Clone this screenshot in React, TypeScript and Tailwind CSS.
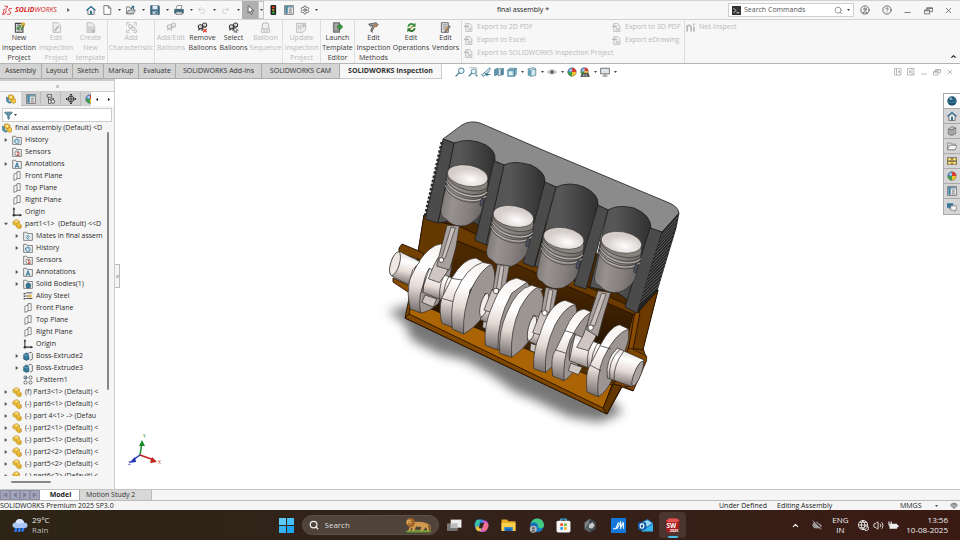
import type { ReactNode } from 'react';
import {
  Search, CircleUser, CircleHelp, Minus, X, Settings, Undo2, Redo2,
  ChevronUp, Volume2, CloudOff, Funnel,
} from 'lucide-react';

type IconName =
  | 'home' | 'file' | 'open' | 'save' | 'print' | 'cursor' | 'traffic' | 'list'
  | 'sheet' | 'edit' | 'template' | 'tag' | 'balloon' | 'balloonX' | 'balloonSel' | 'sequence'
  | 'update' | 'launch' | 'caliper' | 'operations' | 'vendors' | 'export' | 'ni'
  | 'assembly' | 'part' | 'folderHist' | 'folderSensor' | 'folderA' | 'folderMate' | 'folderSolid'
  | 'plane' | 'origin' | 'steel' | 'extrude' | 'pattern' | 'config' | 'target' | 'ball'
  | 'zoom' | 'zoomArea' | 'prev' | 'section' | 'view' | 'cube' | 'eye' | 'scene' | 'monitor'
  | 'globe' | 'library' | 'folder' | 'palette' | 'chat' | 'restore' | 'dockL' | 'dockR';

const folder = <path d="M1 2h5l1 2h8v11H1z" fill="#eee" stroke="#777" strokeWidth="1.4" />;

const page = <path d="M3 1h7l4 4v10H3z" fill="#eee" stroke="currentColor" strokeWidth="1.4" />;

const ball = (
  <>
    <path d="M8 8V1a7 7 0 0 0-7 7z" fill="#4b86c9" />
    <path d="M8 8V1a7 7 0 0 1 7 7z" fill="#df3c30" />
    <path d="M8 8H1a7 7 0 0 0 7 7z" fill="#38a04a" />
    <path d="M8 8h7a7 7 0 0 1-7 7z" fill="#efc32f" />
    <circle cx="8" cy="8" r="7" fill="none" stroke="#666" strokeWidth=".7" />
    <circle cx="6" cy="5" r="2" fill="#fff" opacity=".6" />
  </>
);

const balloons = (
  <g fill="none" stroke="currentColor" strokeWidth="1.7">
    <circle cx="5" cy="7" r="3" />
    <circle cx="11" cy="4.500" r="3" />
    <path d="M4 10l-2 2M9 7L7 13M7 6l2-1M5 7h.5M11 4.500h.5" />
  </g>
);

const icons: Record<IconName, ReactNode> = {
  home: (
    <>
      <path d="M3 8v7h10V8" fill="#eee" stroke="#555" strokeWidth="1.2" />
      <path d="M0 8l8-7 8 7-1.500 1.500L8 4 1.500 9.500z" fill="#2b6c8c" />
      <path d="M6.500 9h3v6h-3z" fill="#2b6c8c" />
    </>
  ),
  file: <path d="M3 1h7l4 4v10H3zM10 1v4h4" fill="#fff" stroke="#555" strokeWidth="1.2" />,
  open: (
    <>
      <path d="M1 3h4l1 2h6v9H1z" fill="#fff" stroke="#555" strokeWidth="1.200" />
      <path d="M4 8h11l-3 6H1z" fill="#c3cdd3" stroke="#555" />
      <path d="M8 1h5v5l-2-2-3 3-1-1 3-3z" fill="#2b6c8c" />
    </>
  ),
  save: (
    <>
      <path d="M1 1h13l1 1v13H1z" fill="#3b6f89" stroke="#34505e" />
      <path d="M4 1h8v6H4z" fill="#e8eef1" />
      <path d="M4 10h8v5H4z" fill="#b9c9d1" />
      <path d="M9 11h2v3H9z" fill="#34505e" />
    </>
  ),
  print: (
    <>
      <path d="M5 1h8l-2 6H3z" fill="#fff" stroke="#555" />
      <path d="M1 7h14v6H1z" fill="#3b6f89" stroke="#34505e" />
      <path d="M3 11h10v4H3z" fill="#ddd" stroke="#555" />
    </>
  ),
  cursor: <path d="M5 1v12l3-3 2 5 2-1-2-5h4z" fill="#fff" stroke="#444" strokeWidth="1.2" />,
  traffic: (
    <>
      <rect x="4" y="0" width="9" height="16" rx="2" fill="#222" />
      <circle cx="8.500" cy="3.500" r="2" fill="#e03a2c" />
      <circle cx="8.500" cy="8" r="2" fill="#a58b26" />
      <circle cx="8.500" cy="12.500" r="2" fill="#2fae46" />
    </>
  ),
  list: (
    <>
      <path d="M1 1h14v14H1z" fill="#f7f7f7" stroke="#555" strokeWidth="1.2" />
      <path d="M2 2h4v12H2z" fill="#4886a3" />
      <path d="M2 2h12v2H2z" fill="#4886a3" />
      <path d="M7.500 6.500h5M7.500 9.500h5M7.500 12.500h5" stroke="#555" strokeWidth="1.3" />
    </>
  ),
  sheet: (
    <>
      <path d="M2 2h11v13H2z" fill="#d8d8d8" stroke="#444" strokeWidth="1.5" />
      <path d="M4 5h7M4 8h7M4 11h5M7 3v11" stroke="#666" />
      <path d="M4 8l2 2 4-5" stroke="#3f9c45" strokeWidth="2" fill="none" />
      <path d="M10 1h6v4l-4 4z" fill="#e0aa35" />
      <path d="M14 5l-4 7" stroke="#487f39" strokeWidth="2" />
    </>
  ),
  edit: (
    <>
      {page}
      <path d="M5 11l5-6 2 2-5 6-2 1z" fill="currentColor" />
    </>
  ),
  template: (
    <>
      {page}
      <path d="M5 7h7v6H5zM5 10h7M8.500 7v6" fill="none" stroke="currentColor" />
      <circle cx="12" cy="13" r="2.500" fill="currentColor" />
    </>
  ),
  tag: (
    <g fill="none" stroke="currentColor" strokeWidth="1.4">
      <path d="M1 1h4M1 1v4M15 1h-4M15 1v4M1 15h4M1 15v-4M15 15h-4M15 15v-4" />
      <circle cx="6" cy="6" r="2.500" />
      <circle cx="11" cy="10" r="2.500" />
      <path d="M3 13l10-9" />
    </g>
  ),
  balloon: balloons,
  balloonX: (
    <>
      {balloons}
      <path d="M9 10l5 5M14 10l-5 5" stroke="#e3432e" strokeWidth="2" />
    </>
  ),
  balloonSel: (
    <>
      {balloons}
      <path d="M9 8v7l2-2 1 3 1-1-1-3h3z" fill="#fff" stroke="#444" />
    </>
  ),
  sequence: (
    <>
      <circle cx="8" cy="6" r="5" fill="#eee" stroke="currentColor" strokeWidth="1.5" />
      <path d="M2 10h12v5H2zM6 10v5M10 10v5" fill="#eee" stroke="currentColor" strokeWidth="1.2" />
    </>
  ),
  update: (
    <>
      <path d="M1 2h13v9l-4 4H1z" fill="#eee" stroke="currentColor" strokeWidth="1.4" />
      <path d="M4 4v7M7 4v7M11 3v5M9 6l2-3 2 3" stroke="currentColor" strokeWidth="1.500" fill="none" />
    </>
  ),
  launch: (
    <>
      <path d="M2 1h9v14H2z" fill="#909090" stroke="#555" />
      <path d="M4 4h5M4 7h5M4 10h5" stroke="#d0d0d0" />
      <path d="M8 5h3V2l5 5-5 5V9H8z" fill="#399842" stroke="#286d2e" strokeWidth=".6" />
    </>
  ),
  caliper: (
    <>
      <path d="M1 3l11-2 3 3-3 3-2-1-4 7-2-1 3-7-4 1z" fill="#999" stroke="#444" />
      <path d="M8 6l4-3 2 2-4 3z" fill="#bf7b3e" />
      <path d="M4 13l3 2" stroke="#555" strokeWidth="1.5" />
    </>
  ),
  operations: (
    <>
      <path d="M2 7a6 6 0 0 1 10-4l2-2v6H8l2-2a3 3 0 0 0-5 2z" fill="#40913f" />
      <path d="M14 9a6 6 0 0 1-10 4l-2 2V9h6l-2 2a3 3 0 0 0 5-2z" fill="#2b752e" />
      <circle cx="8" cy="8" r="1.500" fill="#d49a33" />
    </>
  ),
  vendors: (
    <>
      <path d="M2 1h10v14H2z" fill="#ddd" stroke="#555" strokeWidth="1.2" />
      <path d="M4 4h6M4 7h6M4 10h6" stroke="#777" />
      <path d="M13 5l2 2-6 7-2 1 1-3z" fill="#888" stroke="#444" strokeWidth=".8" />
      <path d="M7 11l3-4 2 1-3 5z" fill="#cf9254" />
    </>
  ),
  export: (
    <>
      {page}
      <path d="M0 5h6V3l3 3-3 3V7H0z" fill="currentColor" />
      <path d="M7 10h6M7 12h6M9 9v5" stroke="currentColor" />
    </>
  ),
  ni: (
    <path d="M2 15V4M2 8c0-5 7-5 7 0v7M14 6v9M14 1v3" fill="none" stroke="currentColor" strokeWidth="3" />
  ),
  assembly: (
    <>
      <path d="M4 2l5-1 4 3-1 4-5 2-4-3z" fill="#f0bd35" stroke="#98711b" strokeWidth=".8" />
      <path d="M0 5l4 1v5l5 2-3 2-5-3z" fill="#4d90ac" stroke="#356373" strokeWidth=".7" />
      <path d="M8 9l5-2 3 2v4l-4 2-4-2z" fill="#f1c647" stroke="#98711b" strokeWidth=".8" />
      <circle cx="8" cy="5" r="1.700" fill="#fff0b0" />
    </>
  ),
  part: (
    <>
      <path d="M1 5l3-3 4-1 4 3v3l3 3v4l-4 2-4-3-1-3-4-1z" fill="#f2c139" stroke="#ad8224" strokeWidth=".9" />
      <path d="M2 5l5 2 5-3M7 7v3l5 2 3-2M12 12v3" fill="none" stroke="#b98d2a" strokeWidth=".9" />
      <path d="M4 4l3-2 3 2-3 2z" fill="#ffe58e" />
    </>
  ),
  folderHist: (
    <>
      {folder}
      <circle cx="8" cy="10" r="3.500" fill="#fff" stroke="#317ba0" strokeWidth="1.5" />
      <path d="M8 8v2h2M4 8v3" stroke="#317ba0" fill="none" />
    </>
  ),
  folderSensor: (
    <>
      {folder}
      <circle cx="8" cy="10" r="3.500" fill="#fff" stroke="#444" />
      <path d="M8 10l2-2" stroke="#d43a2e" strokeWidth="2" />
      <path d="M8 12h4v2H8z" fill="#d43a2e" />
    </>
  ),
  folderA: (
    <>
      {folder}
      <path d="M5 14l3-8 3 8M6 11.500h4" fill="none" stroke="#2b7196" strokeWidth="1.6" />
    </>
  ),
  folderMate: (
    <>
      {folder}
      <path d="M5 7l5 5M7 6l4 4M5 10l4 4" stroke="#4c91ad" strokeWidth="1.6" />
    </>
  ),
  folderSolid: (
    <>
      {folder}
      <path d="M5 8l3-2 4 2v5l-4 2-3-2z" fill="#317799" stroke="#24536a" />
    </>
  ),
  plane: <path d="M3 5l5-2v10l-5 2zM8 3V1h5v11H8" fill="#fbfbfb" stroke="#666" strokeWidth="1.200" />,
  origin: (
    <>
      <path d="M3 2v11h12" fill="none" stroke="#333" strokeWidth="1.7" />
      <path d="M1 4l2-4 2 4zM12 11l4 2-4 2z" fill="#333" />
      <circle cx="3" cy="13" r="2" fill="#333" />
    </>
  ),
  steel: (
    <>
      <path d="M1 4h3M1 8h3M1 12h3" stroke="#333" strokeWidth="2" />
      <path d="M5 3h10M5 8h7M5 12h10" stroke="#555" strokeWidth="1.6" />
      <path d="M10 5l5 2-3 4-4-2z" fill="#e2b64a" />
    </>
  ),
  extrude: (
    <>
      <path d="M1 6l4-3 5 2v8l-4 2-5-2z" fill="#34789a" stroke="#26566d" />
      <path d="M1 6l5 2 4-3" fill="none" stroke="#91bfd2" />
      <path d="M9 3l4-1 2 2v9l-4 2" fill="#eee" stroke="#555" strokeWidth="1.200" />
    </>
  ),
  pattern: (
    <>
      <g fill="#fff" stroke="#555" strokeWidth="1.4">
        <circle cx="4" cy="4" r="2.500" /><circle cx="12" cy="4" r="2.500" />
        <circle cx="4" cy="12" r="2.500" /><circle cx="12" cy="12" r="2.500" />
      </g>
      <path d="M3 3h3v3H3z" fill="#317799" />
    </>
  ),
  config: (
    <g fill="none" stroke="#555" strokeWidth="1.400">
      <path d="M2 1h7v4H2zM4 5v10h4M4 9h4M8 7h4v4H8z" fill="#eee" />
      <circle cx="11" cy="12" r="3" fill="#ddd" />
    </g>
  ),
  target: (
    <g stroke="#333" fill="none" strokeWidth="1.500">
      <circle cx="8" cy="8" r="4.500" />
      <path d="M8 0v16M0 8h16" />
      <path d="M6 2l2-2 2 2M6 14l2 2 2-2M2 6L0 8l2 2M14 6l2 2-2 2" />
    </g>
  ),
  ball,
  zoom: (
    <>
      <circle cx="10" cy="6" r="4.500" fill="#e5f2f8" stroke="#477b93" strokeWidth="1.500" />
      <path d="M7 9l-6 6" stroke="#477b93" strokeWidth="2.200" />
    </>
  ),
  zoomArea: (
    <>
      <path d="M2 1h12v12" fill="none" stroke="#777" strokeDasharray="2 1" />
      <circle cx="9" cy="7" r="4" fill="#e5f2f8" stroke="#477b93" strokeWidth="1.300" />
      <path d="M6 10l-5 5M12 12l3 3" stroke="#477b93" strokeWidth="2" />
    </>
  ),
  prev: (
    <>
      <path d="M14 1l-8 8 3 3 6-8zM6 9l-5 3 2 3 6-3z" fill="#d8e3e8" stroke="#477b93" strokeWidth="1.300" />
      <path d="M8 12h7M8 12l3-3M8 12l3 3" stroke="#2b6c8c" strokeWidth="1.500" />
    </>
  ),
  section: (
    <>
      <path d="M1 4l5-2v10l-5 2z" fill="#5c9bb5" stroke="#3a6b80" />
      <path d="M7 3l4-1v11l-4 1z" fill="#d9e8ee" stroke="#3a6b80" />
      <path d="M12 3l3-1v10l-3 1z" fill="#4b8ba6" stroke="#3a6b80" />
    </>
  ),
  view: (
    <>
      <path d="M1 5l3-3h11v9l-3 4H1z" fill="#85b7cb" stroke="#44788e" />
      <path d="M1 5h11v10M12 5l3-3" fill="none" stroke="#3a6b80" />
      <path d="M3 7h6v6H3z" fill="#e0edf2" />
    </>
  ),
  cube: (
    <>
      <path d="M2 3l8-2 4 2v10l-7 2-5-2z" fill="#d6e8ef" stroke="#44788e" strokeWidth="1.200" />
      <path d="M2 3l5 2v10l-5-2z" fill="#64a0b8" />
      <path d="M7 5l7-2" stroke="#44788e" />
    </>
  ),
  eye: (
    <>
      <path d="M1 8q7-7 14 0-7 6-14 0z" fill="#ddd" stroke="#888" />
      <circle cx="8" cy="8" r="2.700" fill="#555" />
    </>
  ),
  scene: (
    <>
      <g transform="scale(.9)">{ball}</g>
      <path d="M1 15l4-5h8l2 5z" fill="#555" stroke="#333" />
      <path d="M5 12h2v2H5zM9 12h2v2H9z" fill="#ddd" />
    </>
  ),
  monitor: (
    <path d="M1 2h14v9H1zM8 11v3M4 14.500h8" fill="#dfe6e9" stroke="#666" strokeWidth="1.400" />
  ),
  globe: (
    <>
      <circle cx="8" cy="8" r="7.500" fill="#1f5572" />
      <path d="M3 5q5 3 10-1M1 9q7 4 14-1" fill="none" stroke="#5fa2c2" />
      <circle cx="6" cy="4" r="2" fill="#b4d9e8" opacity=".7" />
    </>
  ),
  library: (
    <path d="M2 5l6-4 6 2v9l-6 3-6-2zM2 5l6 1v9M8 6l6-3M5 5v9M11 4v9" fill="#ccc" stroke="#555" />
  ),
  folder: (
    <>
      <path d="M1 3h5l1 2h6v9H1z" fill="#ddd" stroke="#666" />
      <path d="M4 7h12l-3 7H1z" fill="#f5f5f5" stroke="#666" />
    </>
  ),
  palette: (
    <>
      <path d="M0 2h16v12H0z" fill="#666" />
      <path d="M1 3h5l2 3 2-3h5v4H1zM1 9h14v4h-5l-2-2-2 2H1z" fill="#e8b93c" />
      <path d="M3 4h2v2H3zM11 4h2v2h-2zM3 10h2v2H3zM11 10h2v2h-2z" fill="#fff" />
    </>
  ),
  chat: (
    <>
      <path d="M0 2h10v7H5l-2 3V9H0z" fill="#37779a" />
      <path d="M6 6h9v7h-2v2l-3-2H6z" fill="#f4f4f4" stroke="#666" />
    </>
  ),
  restore: (
    <path d="M1 7h9v7H1zM5 7V3h10v7h-5M1 8.500h9M5 4.500h10" fill="none" stroke="currentColor" strokeWidth="1.300" />
  ),
  dockL: <path d="M1 1h13v13H1zM5 1v13M11 5L8 7.500l3 2.500z" fill="none" stroke="currentColor" strokeWidth="1.300" />,
  dockR: <path d="M1 1h13v13H1zM10 1v13M5 5l3 2.500L5 10z" fill="none" stroke="currentColor" strokeWidth="1.300" />,
};

function Icon({ name, className = 'size-[10px]' }: { name: IconName; className?: string }) {
  return (
    <svg viewBox="0 0 16 16" className={`${className} shrink-0`} aria-hidden="true">
      {icons[name]}
    </svg>
  );
}

function Caret({ className = '' }: { className?: string }) {
  return (
    <svg viewBox="0 0 6 4" className={`w-[3px] h-[2px] shrink-0 ${className}`} aria-hidden="true">
      <path d="M0 0h6L3 4z" fill="#444" />
    </svg>
  );
}

function Logo() {
  return (
    <a href="#" className="flex items-center gap-[2px] text-[#d92b2b] w-[70px] pl-[2px]">
      <svg viewBox="0 0 30 30" className="size-[11px]" aria-hidden="true">
        <g fill="none" stroke="#d92b2b" strokeWidth="2.600">
          <path d="M7 3l8 1q3 3-5 6M2 14q10-4 9 4-1 7-9 8l3-9" />
          <path d="M27 10q-9-2-9 3c0 4 7 4 6 9q-2 5-10 3" />
        </g>
      </svg>
      <span className="text-[7px] italic"><b>SOLID</b>WORKS</span>
      <svg viewBox="0 0 4 6" className="w-[3px] h-1 ml-auto" aria-hidden="true"><path d="M0 0l4 3-4 3z" fill="#555" /></svg>
    </a>
  );
}

function TitleBar() {
  const quick: IconName[] = ['open', 'save', 'print'];
  return (
    <header className="flex items-center h-5 border-t border-b border-[#d2d2d2] bg-[#f7f7f7]">
      <div className="flex items-center w-[318px]">
        <Logo />
        <button aria-label="Home" className="ml-4 w-3"><Icon name="home" /></button>
        <button aria-label="New" className="ml-1 flex items-center justify-between w-[19px]"><Icon name="file" /><Caret /></button>
        {quick.map((q) => (
          <button key={q} aria-label={q} className="ml-[5px] flex items-center justify-between w-[19px]"><Icon name={q} /><Caret /></button>
        ))}
        <button aria-label="Undo" className="ml-1 flex items-center justify-between w-[19px] text-[#c4c4c4]"><Undo2 size={9} /><Caret /></button>
        <button aria-label="Redo" className="ml-[5px] flex items-center justify-between w-[19px] text-[#c4c4c4]"><Redo2 size={9} /><Caret /></button>
        <button aria-label="Select" className="ml-[2px] flex items-center h-[18px] bg-[#b0b0b0]">
          <span className="w-4 flex justify-center"><Icon name="cursor" /></span>
          <span className="w-[6px] h-[18px] bg-[#f3f3f3] border border-[#c4c4c4] flex items-center justify-center"><Caret /></span>
        </button>
        <button aria-label="Rebuild" className="ml-1"><Icon name="traffic" /></button>
        <button aria-label="File properties" className="ml-[6px]"><Icon name="list" /></button>
        <button aria-label="Options" className="ml-[6px] flex items-center gap-[5px] text-[#555]"><Settings size={10} /><Caret /></button>
      </div>
      <h1 className="flex-1 text-center text-[7px]">final assembly *</h1>
      <div className="flex items-center w-[232px]">
        <label className="flex items-center h-[14px] w-[126px] border border-[#d0d0d0] bg-white px-[3px]">
          <svg viewBox="0 0 16 16" className="size-[9px]" aria-hidden="true">
            <path d="M0 0h16v16H0z" fill="#333" />
            <path d="M3 4l4 4-4 4M8 12h5" stroke="#fff" fill="none" strokeWidth="1.500" />
          </svg>
          <input aria-label="Search Commands" placeholder="Search Commands" className="flex-1 min-w-0 pl-[3px] outline-none text-[7px] placeholder:text-[#555]" />
          <Search size={9} className="text-[#777] mr-1" />
          <Caret />
        </label>
        <div className="flex-1 flex justify-between items-center pl-[6px] pr-[7px] text-[#555]">
          <button aria-label="Account"><CircleUser size={10} /></button>
          <button aria-label="Help"><CircleHelp size={10} /></button>
          <button aria-label="Minimize"><Minus size={9} className="mt-1" /></button>
          <button aria-label="Restore"><Icon name="restore" className="size-[9px]" /></button>
          <button aria-label="Close"><X size={9} /></button>
        </div>
      </div>
    </header>
  );
}

interface Command {
  icon: IconName;
  lines: string[];
  width: string;
  off?: boolean;
}

const groups: Command[][] = [
  [
    { icon: 'sheet', lines: ['New', 'Inspection', 'Project'], width: 'w-[38px]' },
    { icon: 'edit', lines: ['Edit', 'Inspection', 'Project'], width: 'w-[36px]', off: true },
    { icon: 'template', lines: ['Create', 'New', 'template'], width: 'w-[33px]', off: true },
  ],
  [{ icon: 'tag', lines: ['Add', 'Characteristic'], width: 'w-[46px]', off: true }],
  [
    { icon: 'balloon', lines: ['Add/Edit', 'Balloons'], width: 'w-[32px]', off: true },
    { icon: 'balloonX', lines: ['Remove', 'Balloons'], width: 'w-[31px]' },
    { icon: 'balloonSel', lines: ['Select', 'Balloons'], width: 'w-[31px]' },
    { icon: 'sequence', lines: ['Balloon', 'Sequence'], width: 'w-[33px]', off: true },
  ],
  [{ icon: 'update', lines: ['Update', 'Inspection', 'Project'], width: 'w-[37px]', off: true }],
  [{ icon: 'launch', lines: ['Launch', 'Template', 'Editor'], width: 'w-[33px]' }],
  [
    { icon: 'caliper', lines: ['Edit', 'Inspection', 'Methods'], width: 'w-[37px]' },
    { icon: 'operations', lines: ['Edit', 'Operations'], width: 'w-[38px]' },
    { icon: 'vendors', lines: ['Edit', 'Vendors'], width: 'w-[31px]' },
  ],
];

function ExportColumn({ items, className }: { items: string[]; className: string }) {
  return (
    <div className={`flex flex-col items-start pt-[1px] text-[#b9b9b9] ${className}`}>
      {items.map((t) => (
        <button key={t} disabled className="flex items-center gap-1 h-[13px] whitespace-nowrap">
          <Icon name={t === 'Net-Inspect' ? 'ni' : 'export'} className="size-[9px]" />{t}
        </button>
      ))}
    </div>
  );
}

function Ribbon() {
  return (
    <section className="flex h-11 bg-[#f7f7f7] border-b border-[#b5b5b5] text-[7px]">
      {groups.map((g, i) => (
        <div key={i} className="flex border-r border-[#dedede]">
          {g.map((c, j) => (
            <button
              key={j}
              disabled={c.off}
              className={`${c.width} flex flex-col items-center pt-[2px] whitespace-nowrap leading-[10px] ${c.off ? 'text-[#bababa]' : 'text-[#3a3a3a]'}`}
            >
              <Icon name={c.icon} className="size-[11px]" />
              {c.lines.map((l) => <span key={l}>{l}</span>)}
            </button>
          ))}
        </div>
      ))}
      <ExportColumn className="w-[148px] pl-[2px]" items={['Export to 2D PDF', 'Export to Excel', 'Export to SOLIDWORKS Inspection Project']} />
      <ExportColumn className="w-[75px] pl-[2px] border-r border-[#dedede]" items={['Export to 3D PDF', 'Export eDrawing']} />
      <ExportColumn className="pl-[1px]" items={['Net-Inspect']} />
      <button aria-label="Collapse ribbon" className="ml-auto self-end p-[3px]"><ChevronUp size={7} strokeWidth={4} /></button>
    </section>
  );
}

const tabs = [
  ['Assembly', 'w-[42px]'], ['Layout', 'w-[31px]'], ['Sketch', 'w-[31px]'], ['Markup', 'w-[35px]'],
  ['Evaluate', 'w-[37px]'], ['SOLIDWORKS Add-Ins', 'w-[86px]'], ['SOLIDWORKS CAM', 'w-[78px]'],
];

const viewTools: { icon: IconName; menu?: boolean }[] = [
  { icon: 'zoom' }, { icon: 'zoomArea' }, { icon: 'prev' }, { icon: 'section' },
  { icon: 'view', menu: true }, { icon: 'cube', menu: true }, { icon: 'eye', menu: true },
  { icon: 'ball' }, { icon: 'scene', menu: true }, { icon: 'monitor', menu: true },
];

function TabRow() {
  return (
    <nav className="flex h-[15px] text-[7px] bg-white">
      {tabs.map(([t, w]) => (
        <button key={t} className={`${w} bg-[#d4d4d4] border-r border-b border-[#aaa] whitespace-nowrap text-[#333]`}>{t}</button>
      ))}
      <button className="w-[102px] bg-[#f7f7f7] border-r border-b border-[#ccc] font-bold text-[#333] whitespace-nowrap">SOLIDWORKS Inspection</button>
      <div className="flex items-center gap-[3px] pl-[13px]">
        {viewTools.map((v) => (
          <button key={v.icon} aria-label={v.icon} className="flex items-center gap-1">
            <Icon name={v.icon} />{v.menu && <Caret />}
          </button>
        ))}
      </div>
      <div className="ml-auto flex items-center gap-[5px] pr-[6px] text-[#999]">
        <button aria-label="Dock left"><Icon name="dockL" className="size-2" /></button>
        <button aria-label="Dock right"><Icon name="dockR" className="size-2" /></button>
        <button aria-label="Minimize document"><Minus size={8} className="mt-1" /></button>
        <button aria-label="Restore document"><Icon name="restore" className="size-2" /></button>
        <button aria-label="Close document"><X size={8} /></button>
      </div>
    </nav>
  );
}

interface Node {
  icon: IconName;
  text: string;
  level: 0 | 1 | 2;
  arrow?: 'open' | 'closed';
}

const tree: Node[] = [
  { icon: 'assembly', text: 'final assembly (Default) <D', level: 0 },
  { icon: 'folderHist', text: 'History', level: 1, arrow: 'closed' },
  { icon: 'folderSensor', text: 'Sensors', level: 1 },
  { icon: 'folderA', text: 'Annotations', level: 1, arrow: 'closed' },
  { icon: 'plane', text: 'Front Plane', level: 1 },
  { icon: 'plane', text: 'Top Plane', level: 1 },
  { icon: 'plane', text: 'Right Plane', level: 1 },
  { icon: 'origin', text: 'Origin', level: 1 },
  { icon: 'part', text: 'part1<1>  (Default) <<D', level: 1, arrow: 'open' },
  { icon: 'folderMate', text: 'Mates in final assem', level: 2, arrow: 'closed' },
  { icon: 'folderHist', text: 'History', level: 2, arrow: 'closed' },
  { icon: 'folderSensor', text: 'Sensors', level: 2 },
  { icon: 'folderA', text: 'Annotations', level: 2, arrow: 'closed' },
  { icon: 'folderSolid', text: 'Solid Bodies(1)', level: 2, arrow: 'closed' },
  { icon: 'steel', text: 'Alloy Steel', level: 2 },
  { icon: 'plane', text: 'Front Plane', level: 2 },
  { icon: 'plane', text: 'Top Plane', level: 2 },
  { icon: 'plane', text: 'Right Plane', level: 2 },
  { icon: 'origin', text: 'Origin', level: 2 },
  { icon: 'extrude', text: 'Boss-Extrude2', level: 2, arrow: 'closed' },
  { icon: 'extrude', text: 'Boss-Extrude3', level: 2, arrow: 'closed' },
  { icon: 'pattern', text: 'LPattern1', level: 2 },
  { icon: 'part', text: '(f) Part3<1> (Default) <', level: 1, arrow: 'closed' },
  { icon: 'part', text: '(-) part6<1> (Default) <', level: 1, arrow: 'closed' },
  { icon: 'part', text: '(-) part 4<1> -> (Defau', level: 1, arrow: 'closed' },
  { icon: 'part', text: '(-) part2<1> (Default) <', level: 1, arrow: 'closed' },
  { icon: 'part', text: '(-) part5<1> (Default) <', level: 1, arrow: 'closed' },
  { icon: 'part', text: '(-) part2<2> (Default) <', level: 1, arrow: 'closed' },
  { icon: 'part', text: '(-) part5<2> (Default) <', level: 1, arrow: 'closed' },
  { icon: 'part', text: '(-) part6<2> (Default) <', level: 1, arrow: 'closed' },
];

const indent = { 0: 'pl-[2px]', 1: 'pl-1', 2: 'pl-[15px]' };

function FeatureTree() {
  const panes: IconName[] = ['list', 'config', 'target'];
  return (
    <aside className="w-[115px] shrink-0 flex flex-col bg-[#f5f5f5] border-r border-[#ccc] text-[7px]">
      <div className="h-[13px] border-t-2 border-b border-[#ccc] flex items-center justify-center">
        <span className="size-[3px] rounded-full border border-[#999]" />
      </div>
      <div className="flex h-[14px]">
        <button aria-label="Feature tree" className="w-[21px] flex items-center justify-center"><Icon name="assembly" /></button>
        {panes.map((p) => (
          <button key={p} aria-label={p} className="w-5 flex items-center justify-center bg-[#d2d2d2] border-r border-b border-[#bbb]"><Icon name={p} /></button>
        ))}
        <button aria-label="Display" className="w-[10px] pl-1 overflow-hidden bg-[#d2d2d2] flex items-center"><Icon name="ball" /></button>
        <button aria-label="Scroll left" className="w-3 bg-white flex items-center justify-center">
          <svg viewBox="0 0 4 6" className="w-[2px] h-[3px]"><path d="M4 0L0 3l4 3z" /></svg>
        </button>
        <button aria-label="Scroll right" className="w-[11px] bg-white flex items-center justify-center">
          <svg viewBox="0 0 4 6" className="w-[2px] h-[3px]"><path d="M0 0l4 3-4 3z" /></svg>
        </button>
      </div>
      <button aria-label="Filter" className="mx-[2px] mt-[2px] h-[14px] bg-white border border-[#ccc] flex items-center pl-[1px] gap-[1px]">
        <Funnel size={9} fill="#5d91a9" className="text-[#426f84]" /><Caret />
      </button>
      <div className="flex flex-1 min-h-0">
        <ul className="flex-1 min-w-0 overflow-hidden text-[#2c2c2c]">
          {tree.map((n, i) => (
            <li key={i} className={`h-3 flex items-center whitespace-pre ${indent[n.level]}`}>
              {n.level > 0 && (
                <span className="w-2 shrink-0">
                  {n.arrow && (
                    <svg viewBox="0 0 6 6" className="size-1" aria-hidden="true">
                      <path d={n.arrow === 'open' ? 'M0 1h6L3 5z' : 'M1 0l4 3-4 3z'} fill="#555" />
                    </svg>
                  )}
                </span>
              )}
              <Icon name={n.icon} /><span className="pl-[3px]">{n.text}</span>
            </li>
          ))}
        </ul>
        <div className="w-[10px] pt-[10px] pl-[3px]">
          <div className="w-[2px] h-3/4 bg-[#888] rounded" />
        </div>
      </div>
      <div className="h-[13px] pt-[5px] pl-[11px]"><div className="w-10 h-[2px] bg-[#888] rounded" /></div>
    </aside>
  );
}

const pistons = [[0, 0], [45.700, 40.700], [96, 62.600], [153.700, 66.600]];

function Piston({ x, y }: { x: number; y: number }) {
  return (
    <g transform={`translate(${x} ${y})`} stroke="#2c2a29" strokeWidth=".6">
      <path d="M447 173L446 186 441 209Q440 217 446 219 452 226 461 226 467 226 471 223 479 218 481 213L487 191 488 181z" fill="url(#piston)" />
      <path d="M446 181c6 14 31 20 41 11M445 185c6 14 31 20 41 11" fill="none" stroke="#bdb8b4" strokeWidth="1.100" />
      <path d="M446 179c6 14 31 20 41 12M446 182c6 14 31 20 41 12M445 184c6 14 31 20 41 11M445 187c6 14 30 20 40 11" fill="none" />
      <path d="M447 172v4c6 13 29 19 40 12l1-6z" fill="#86827c" />
      <ellipse cx="467.700" cy="175.700" rx="20.400" ry="10.600" transform="rotate(10 467.700 175.700)" fill="url(#crown)" />
      <ellipse cx="482" cy="202" rx="1.700" ry="4.500" transform="rotate(14 482 202)" fill="#4a5163" />
    </g>
  );
}

// crank web: a lit rim and a shaded cheek
function Web({ rim, face }: { rim: string; face?: string }) {
  return (
    <>
      <path d={rim} fill="url(#rim)" />
      {face && <path d={face} fill="#9d9592" />}
    </>
  );
}

// connecting rod: shank with a dark channel, then the big end
function Rod({ top, groove, end }: { top: string; groove: string; end: string }) {
  return (
    <>
      <path d={end} fill="#cfc5c1" />
      <path d={top} fill="#a8a09c" />
      <path d={groove} fill="#c9c0bc" stroke="#3c3634" strokeWidth="2" />
    </>
  );
}

function Engine() {
  const fins = Array.from({ length: 17 }, (_, i) => i);
  return (
    <svg viewBox="115 79 845 410" className="w-full h-full" role="img" aria-label="Engine assembly">
      <defs>
        <linearGradient id="piston" x1="0" x2="1" y1="0" y2=".2">
          <stop offset="0" stopColor="#716d6a" /><stop offset=".35" stopColor="#979290" /><stop offset=".7" stopColor="#85807d" /><stop offset="1" stopColor="#6a6663" />
        </linearGradient>
        <radialGradient id="crown" cx=".6" cy=".65">
          <stop offset="0" stopColor="#fff" /><stop offset="1" stopColor="#d4cdc9" />
        </radialGradient>
        <linearGradient id="bore" x1="0" x2="1">
          <stop offset="0" stopColor="#535353" /><stop offset=".4" stopColor="#575757" /><stop offset="1" stopColor="#303030" />
        </linearGradient>
        <linearGradient id="rim" x1=".5" x2=".4" y1="0" y2="1">
          <stop offset="0" stopColor="#f6f3f1" /><stop offset=".35" stopColor="#fff" /><stop offset=".65" stopColor="#e4d9d3" /><stop offset="1" stopColor="#777170" />
        </linearGradient>
        <linearGradient id="shaft" x1=".6" x2=".4" y1="0" y2="1">
          <stop offset="0" stopColor="#d8d2cf" /><stop offset=".3" stopColor="#fff" /><stop offset=".6" stopColor="#e5dad4" /><stop offset="1" stopColor="#6f6967" />
        </linearGradient>
        <linearGradient id="back" x1="0" x2=".25" y1="1" y2="0">
          <stop offset="0" stopColor="#9b5a04" /><stop offset=".5" stopColor="#2a1500" /><stop offset="1" stopColor="#633602" />
        </linearGradient>
        <filter id="soft" x="-20%" y="-30%" width="140%" height="160%"><feGaussianBlur stdDeviation="5.500" /></filter>
      </defs>

      <path d="M388 312L412 304 608 398 623 412 600 422 570 417 535 400 515 392 490 374 465 360 440 354 412 340 404 322z" fill="#555" opacity=".8" filter="url(#soft)" />

      {/* crankcase */}
      <g stroke="#241200" strokeWidth=".9" strokeLinejoin="round">
        <path d="M424 215L418 254 405 318 607 414 622 387 633 391 646 357 643 348 658 290 640 300 440 215z" fill="#774203" />
        <path d="M432 218L424 255 410 306 606 396 616 380 634 311 470 240z" fill="url(#back)" />
        <path d="M411 300L417 303 612 385 603 409 409 316z" fill="#ab6403" />
        <path d="M405 318L409 314 603 408 607 414z" fill="#804700" />
        <path d="M607 414L603 408 613 384 622 386z" fill="#653700" />
        <path d="M629 348L640 310 658 290 643 350z" fill="#6b3a00" />
        <path d="M628 350L631 335 635 311 640 313 633 349z" fill="#8a4c00" />
        <path d="M438 222L470 200 570 230 640 290 634 312 540 276 440 246z" fill="#4a2800" stroke="none" />
        <path d="M457 225L520 256 634 308 635 315 520 266 455 240z" fill="#6a3a00" />
        <path d="M424 215L438 222 460 226 445 250 424 262 417 258z" fill="#653800" />
        <path d="M399 248L402 244 419 251 424 254 421 260 399 253z" fill="#744000" />
        <path d="M393 278L410 286 408 292 393 282z" fill="#8a4d00" />
      </g>

      {/* head */}
      <g stroke="#1c1c1c" strokeWidth=".8" strokeLinejoin="round">
        <path d="M661 232L679 213 676 228 657 291 637 313z" fill="#242424" />
        <path d="M443 139L462 125Q470 120 480 123L545 151 667 202Q678 206 679 213L662 232 650 228 608 210 556 187 504 165 454 143z" fill="#8b8b8b" />
        <path d="M454 143Q470 137 486 145 496 151 495 160L480 226 466 218 438 223z" fill="url(#bore)" />
        <path d="M504 165Q514 160 531 165 546 172 545 182L530 258 486 244z" fill="url(#bore)" />
        <path d="M556 187Q570 181 584 187 599 194 598 205L585 283 535 266z" fill="url(#bore)" />
        <path d="M608 210Q618 204 634 208 651 215 651 228L632 303 618 293 590 287z" fill="url(#bore)" />
        <path d="M443 139L454 143 438 223 425 219z" fill="#4b4b4b" />
        <path d="M494 161L504 165 486 245 475 240z" fill="#4b4b4b" />
        <path d="M545 182L556 187 534 267 523 263z" fill="#4b4b4b" />
        <path d="M598 205L608 210 586 289 574 285z" fill="#4b4b4b" />
        <path d="M650 228L662 232 637 313 625 307z" fill="#4b4b4b" />
        {fins.map((i) => (
          <path key={i} d={`M${661 - i * 1.35} ${236 + i * 4.2}L${678 - i * 1.2} ${217 + i * 4.3}`} stroke="#666" strokeWidth=".9" />
        ))}
        <path d="M442 142L425 217" stroke="#2b2b2b" strokeWidth="3" strokeDasharray="2.600 1.700" fill="none" />
      </g>

      {pistons.map(([x, y]) => <Piston key={x} x={x} y={y} />)}

      {/* crankshaft, left half */}
      <g transform="translate(370 230) scale(.3333)" stroke="#332e2c" strokeWidth="2.200" strokeLinejoin="round">
        <Web rim="M145 97Q180 45 212 42 235 45 240 70L170 150 150 248 120 236Q110 190 118 150z" face="M240 70Q250 90 240 140L205 220Q180 245 152 249 140 200 170 140z" />
        <path d="M90 65L150 95 128 120 115 164 65 138Q54 110 72 78z" fill="url(#shaft)" />
        <ellipse cx="75" cy="101" rx="13" ry="37" transform="rotate(17 75 101)" fill="#eee8e5" />
        <path d="M165 195l35 12-10 24-34-14z" fill="#cfc6c2" />
        <path d="M178 115L248 145 218 212 155 185z" fill="url(#shaft)" />
        <path d="M178 115q-20 30-18 70M235 120q-30 30-26 88M246 128q-28 30-25 86" fill="none" />
        <Rod
          top="M231 -14L268 -12 258 50 246 95 238 120 200 108 206 82z"
          groove="M243 -8L256 -6 226 84 214 88z"
          end="M205 82L228 92 246 95 230 128 208 158 175 146 192 105z"
        />
        <circle cx="214" cy="90" r="7" fill="#fff" />
        <Web rim="M245 145Q280 85 318 84L340 97 262 180 247 292 216 280Q205 240 215 205z" />
        <path d="M245 145l38 6M215 205l35 10" fill="none" />
        <Web rim="M255 190Q290 110 338 97L365 103 300 180 280 312 247 297Q240 240 255 190z" face="M365 103Q385 135 366 205 340 280 281 312 277 240 305 175 335 115 365 103z" />
        <path d="M345 190L410 220 380 290 332 270z" fill="url(#shaft)" />
        <ellipse cx="343" cy="225" rx="11" ry="36" transform="rotate(15 343 225)" fill="#f1edea" />
        <path d="M340 274l20 6-6 20-16-8z" fill="#cfc6c2" />
        <Rod
          top="M382 102L418 108 402 195 368 182z"
          groove="M391 106L402 108 392 180 380 174z"
          end="M366 178L402 192 380 230 365 248 342 240z"
        />
        <circle cx="378" cy="183" r="8" fill="#fff" />
        <Web rim="M368 225Q395 150 440 144L472 156 410 230 383 360 346 346Q340 285 368 225z" face="M472 156L480 170 420 240 400 350 384 360Q380 270 425 190z" />
        <Web rim="M410 250Q440 175 485 166L518 177 450 245 424 382 389 370Q385 305 410 250z" face="M504 172Q530 190 515 255 490 340 425 382 420 300 450 235 480 180 504 172z" />
      </g>

      {/* crankshaft, right half */}
      <g transform="translate(520 270) scale(.3333)" stroke="#332e2c" strokeWidth="2.200" strokeLinejoin="round">
        <path d="M40 135L100 160 75 235 22 212z" fill="url(#shaft)" />
        <ellipse cx="36" cy="175" rx="11" ry="38" transform="rotate(14 36 175)" fill="#f1edea" />
        <path d="M32 220l22 7-6 22-18-8z" fill="#cfc6c2" />
        <Rod
          top="M77 52L112 59 96 140 64 126z"
          groove="M87 58L99 61 88 128 75 122z"
          end="M62 124L96 138 76 178 62 196 38 188z"
        />
        <circle cx="74" cy="129" r="8" fill="#fff" />
        <Web rim="M60 192Q88 100 135 91L166 103 100 190 76 308 41 296Q38 240 60 192z" face="M166 103Q178 130 160 185 135 260 77 308 70 240 105 165 135 110 166 103z" />
        <Web rim="M135 182Q160 120 192 117L214 126 165 190 132 332 98 318Q90 260 107 240z" face="M214 126L218 160 180 270Q160 315 132 332 128 270 150 210 185 140 214 126z" />
        <path d="M135 182l32 10M107 240l32 10" fill="none" />
        <path d="M152 280l35 12-12 22-30-12z" fill="#cfc6c2" />
        <path d="M165 193L240 222 270 236 240 305 200 292 148 272z" fill="url(#shaft)" />
        <path d="M168 193q-24 30-20 76M230 200q-34 36-27 94M240 210q-30 36-25 92" fill="none" />
        <Rod
          top="M234 62L272 68 250 140 234 200 200 180 205 150z"
          groove="M245 70L258 72 224 168 210 166z"
          end="M202 162L240 172 225 205 205 242 170 232 190 195z"
        />
        <circle cx="212" cy="173" r="8" fill="#fff" />
        <Web rim="M240 227Q270 170 298 164L326 177 268 245 235 380 201 366Q195 310 210 285z" face="M326 177Q330 210 316 240L280 320Q262 365 235 380 228 320 250 265 285 190 326 177z" />
        <path d="M240 227l33 10M210 285l34 18" fill="none" />
        <path d="M322 238L330 234 380 258 380 272 340 362 312 350 334 348z" fill="#7d4500" stroke="#241200" />
        <path d="M292 234L372 270 362 310 336 350 262 324Q255 270 292 234z" fill="url(#shaft)" />
        <path d="M300 238q-38 35-30 88M312 243q-32 40-30 90" fill="none" />
        <ellipse cx="353" cy="311" rx="10" ry="40" transform="rotate(22 353 311)" fill="#aaa2a0" />
      </g>

      {/* view triad */}
      <g strokeWidth="1.500">
        <path d="M140 455L142 443" stroke="#168a28" /><path d="M139 446l3-6 3 6z" fill="#168a28" />
        <path d="M140 455L154 460" stroke="#c2211c" /><path d="M152 457l5 5-7 1z" fill="#c2211c" />
        <path d="M140 455L133 460" stroke="#2034b5" /><path d="M135 457l-6 6 7-1z" fill="#2034b5" />
      </g>
      <g fontSize="5">
        <text x="143" y="438" fill="#168a28">Y</text>
        <text x="158" y="464" fill="#c2211c">X</text>
        <text x="128" y="465" fill="#2034b5">Z</text>
      </g>
    </svg>
  );
}

function TaskPane() {
  const items: IconName[] = ['globe', 'home', 'library', 'folder', 'palette', 'ball', 'list', 'chat'];
  return (
    <div className="absolute right-0 top-[14px] flex flex-col border border-r-0 border-[#aaa]">
      {items.map((n, i) => (
        <button key={n} aria-label={n} className={`w-4 h-[15px] flex items-center justify-center border-b border-[#aaa] last:border-b-0 ${i ? 'bg-[#d5d5d5]' : 'bg-white'}`}>
          <Icon name={n} />
        </button>
      ))}
    </div>
  );
}

function BottomBars() {
  return (
    <>
      <div className="flex h-[11px] bg-[#f5f5f5] border-t border-[#c4c4c4] text-[7px] leading-[10px]">
        {['M12 3v10L6 8zM4 3v10', 'M11 3v10L5 8z', 'M5 3v10l6-5z', 'M4 3v10l6-5zM12 3v10'].map((d) => (
          <button key={d} aria-label="Scroll tabs" className="w-[10px] bg-[#a5a5bb] border border-[#8d8da3] flex items-center justify-center">
            <svg viewBox="0 0 16 16" className="size-2"><path d={d} fill="#7d7d92" stroke="#7d7d92" /></svg>
          </button>
        ))}
        <button className="w-10 pl-[2px] bg-white border-r border-[#aaa] font-bold">Model</button>
        <button className="w-[72px] pl-[6px] text-left bg-[#d8d8d8] border-r border-[#bbb] text-[#333]">Motion Study 2</button>
      </div>
      <footer className="flex items-center h-[10px] bg-[#f5f5f5] border-t border-[#bbb] text-[7px] leading-[9px] text-[#222]">
        <span className="flex-1">SOLIDWORKS Premium 2025 SP3.0</span>
        <span className="w-[58px]">Under Defined</span>
        <span className="w-[123px]">Editing Assembly</span>
        <span className="w-[35px]">MMGS</span>
        <Caret />
        <svg viewBox="0 0 16 16" className="size-2 ml-3 mr-[2px]"><path d="M1 4l7-3 7 3v4l-7 6-7-6z" fill="#888" /><path d="M3 5l5 2 5-2M3 8l5 2 5-2" stroke="#ddd" fill="none" /></svg>
      </footer>
    </>
  );
}

const apps: { name: string; art: ReactNode }[] = [
  {
    name: 'Task view',
    art: <><path d="M0 10h20v14H0z" fill="#777" /><path d="M7 3h20v15H7z" fill="#eee" /><path d="M7 10h13v8H7z" fill="#bbb" /></>,
  },
  {
    name: 'Copilot',
    art: (
      <>
        <path d="M8 3h8l4 8-5 13H8q-4 0-5-4L1 14Q1 5 8 3z" fill="#2f8de4" />
        <path d="M8 3q-6 2-6 11l5 3 5-12z" fill="#39c4a3" />
        <path d="M17 4q8 0 10 7 0 13-9 15h-8q4-2 5-8z" fill="#c95bd0" />
        <path d="M20 8q7 2 7 8l-5 8-7-1z" fill="#f0738a" />
        <path d="M3 16q0 8 6 9l5-2-3-7z" fill="#f2bc3c" />
        <path d="M12 9h7l-4 10H9z" fill="#35261a" />
      </>
    ),
  },
  {
    name: 'File Explorer',
    art: <><path d="M1 3h10l3 3h13v18H1z" fill="#e9a825" /><path d="M1 9h26v15H1z" fill="#fccf4b" /><path d="M6 17h16v7H6z" fill="#2584d1" /><path d="M9 20h10v4H9z" fill="#1863ad" /></>,
  },
  {
    name: 'Edge',
    art: (
      <>
        <circle cx="15" cy="14" r="12.500" fill="#1580c5" />
        <path d="M3 11Q6 1 16 1q11 1 12 12 0 6-7 6-5 0-4-4Q16 8 8 8q-4 1-5 3z" fill="#43ca87" />
        <path d="M3 12q9-7 12 1-5 7 4 11-10 5-15-4z" fill="#166bb4" />
        <circle cx="8" cy="21" r="6.500" fill="#b5b9bd" /><circle cx="8" cy="19" r="2.200" fill="#555" /><path d="M4 25q4-6 8 0z" fill="#555" />
      </>
    ),
  },
  {
    name: 'Store',
    art: (
      <>
        <path d="M9 7V2h10v5" fill="none" stroke="#3ba3dd" strokeWidth="2.500" />
        <rect x="1" y="5" width="26" height="22" rx="3" fill="#f5f5f5" />
        <path d="M8 10h5v5H8z" fill="#e8502b" /><path d="M15 10h5v5h-5z" fill="#79b92e" /><path d="M8 17h5v5H8z" fill="#2a9ee5" /><path d="M15 17h5v5h-5z" fill="#f6b91c" />
      </>
    ),
  },
  {
    name: 'Gem',
    art: <><path d="M13 1l11 6v14l-10 6L3 21V9z" fill="#3e474b" /><path d="M13 1l-3 12-7 8V9z" fill="#777f83" /><path d="M12 11l6-3 4 6-5 6-7-2z" fill="#c4c9cb" /><path d="M3 21l8-5 3 11z" fill="#59666b" /></>,
  },
  {
    name: 'Blue',
    art: <><path d="M0 0h28v28H0z" fill="#1377dc" /><path d="M4 20h5l5-12M11 20l7-12v12M17 20l6-12v12" stroke="#fff" strokeWidth="2" fill="none" /></>,
  },
  {
    name: 'Outlook',
    art: (
      <>
        <path d="M6 8l12-6 10 7v15H6z" fill="#2378c6" /><path d="M9 8l9-4 8 6-9 6z" fill="#9bd8f5" /><path d="M6 25l22-14v14z" fill="#35b5ee" />
        <rect x="0" y="8" width="15" height="14" rx="2" fill="#0f5eae" /><ellipse cx="7.500" cy="15" rx="3.500" ry="4" stroke="#fff" strokeWidth="2" fill="none" />
      </>
    ),
  },
  {
    name: 'SolidWorks',
    art: (
      <>
        <path d="M2 5l5-4h15l5 3-1 18-6 5H5l-3-4z" fill="#a81e20" /><path d="M2 5l5-4h15l5 3-5 4H6z" fill="#e55252" />
        <text x="3" y="18" fontSize="12" fontWeight="bold" fill="#fff">SW</text>
        <text x="9" y="26" fontSize="7" fontWeight="bold" fill="#fff">2025</text>
      </>
    ),
  },
];

function Taskbar() {
  return (
    <div className="flex items-center h-[30px] text-[#eee] text-[8px] bg-linear-to-r from-[#2d2416] via-[#33221a] to-[#3a1b14]">
      <div className="flex-1 flex items-center gap-1 pl-3">
        <svg viewBox="0 0 32 28" className="w-4 h-[14px]" aria-hidden="true">
          <path d="M9 19l-2 7M16 18l-2 9M23 19l-2 6" stroke="#2c7df0" strokeWidth="5" strokeLinecap="round" />
          <path d="M7 20Q0 19 1 13q1-4 6-4Q9 1 17 2q6 1 7 7 7 0 7 6 0 5-6 5z" fill="#a9c6f4" />
          <path d="M7 9Q9 1 17 2q6 1 7 7-8 5-17 0z" fill="#d6e3fb" />
        </svg>
        <p className="leading-[10px]">29°C<br /><span className="text-[#bbb]">Rain</span></p>
      </div>
      <div className="flex items-center pl-[5px]">
        <button aria-label="Start" className="grid grid-cols-2 gap-px size-[15px]">
          <span className="bg-[#5ccbfa]" /><span className="bg-[#47c0f8]" /><span className="bg-[#38b4f5]" /><span className="bg-[#1ea3f0]" />
        </button>
        <label className="ml-2 flex items-center h-5 w-[137px] rounded-full bg-[#50443a] border border-[#5c5047] px-[6px]">
          <Search size={10} strokeWidth={3} />
          <input aria-label="Search" placeholder="Search" className="flex-1 min-w-0 pl-[6px] outline-none text-[8px] placeholder:text-[#ddd]" />
          <svg viewBox="0 0 54 32" className="w-[27px] h-4" aria-hidden="true">
            <path d="M0 28q27-5 54 0l-5 3H5z" fill="#6c9b34" />
            <path d="M14 10q15-2 28 2 6 3 5 8l2 8h-4l-3-8-7 8h-5l3-8-11-1-3 9h-4l-1-8-4 8H6z" fill="#cf9a4e" />
            <path d="M45 13q7 3 6 12" stroke="#b67b31" strokeWidth="2" fill="none" />
            <circle cx="11" cy="11" r="9" fill="#a2642b" /><circle cx="8" cy="10" r="5" fill="#dda858" />
            <path d="M6 9h1M10 9h1M7 13h3" stroke="#3b220c" strokeWidth="1.500" />
          </svg>
        </label>
        <div className="flex w-[248px] pl-[2px]">
          {apps.map((a, i) => (
            <button key={a.name} aria-label={a.name} className={`relative flex-1 h-[26px] flex flex-col items-center justify-center rounded ${i === 8 ? 'bg-white/10' : ''}`}>
              <svg viewBox="0 0 28 28" className="size-[15px]">{a.art}</svg>
              {i === 8 && <span className="absolute bottom-0 w-[10px] h-[2px] rounded bg-[#4db8ea]" />}
            </button>
          ))}
        </div>
      </div>
      <div className="flex-1 flex items-center justify-end pr-3">
        <button aria-label="Hidden icons"><ChevronUp size={9} strokeWidth={3} /></button>
        <CloudOff size={10} className="ml-3 text-[#aaa]" fill="#999" />
        <p className="w-[17px] ml-[10px] text-center leading-[10px]">ENG<br />IN</p>
        <svg viewBox="0 0 24 24" className="size-[11px] ml-[9px]" fill="none" stroke="#eee" strokeWidth="2">
          <circle cx="11" cy="11" r="10" /><path d="M1 11h20M3 5h17M3 17h11M11 1q-8 10 0 20M11 1q8 10 0 20" /><circle cx="18" cy="18" r="5" fill="#38201a" /><path d="M15 21l6-6" />
        </svg>
        <Volume2 size={11} className="ml-1" />
        <svg viewBox="0 0 24 20" className="w-[11px] h-[9px] ml-1"><path d="M3 6h17v11H3zM20 9h3v5h-3z" fill="#eee" /><path d="M2 1v8h5V1" fill="none" stroke="#eee" strokeWidth="2.500" /></svg>
        <p className="w-[49px] text-right leading-[10px]">13:56<br />10-08-2025</p>
      </div>
    </div>
  );
}

export default function App() {
  return (
    <div className="h-screen flex flex-col overflow-hidden bg-white text-[#222] font-['Open_Sans','Noto_Sans',sans-serif]">
      <TitleBar />
      <Ribbon />
      <TabRow />
      <main className="flex flex-1 min-h-0">
        <FeatureTree />
        <div className="relative flex-1 min-w-0">
          <Engine />
          <button aria-label="Collapse panel" className="absolute left-0 top-[185px] w-[5px] h-6 border border-l-0 border-[#bbb] bg-[#f5f5f5] flex items-center justify-center">
            <span className="size-[3px] rounded-full border border-[#999]" />
          </button>
          <TaskPane />
        </div>
      </main>
      <BottomBars />
      <Taskbar />
    </div>
  );
}
